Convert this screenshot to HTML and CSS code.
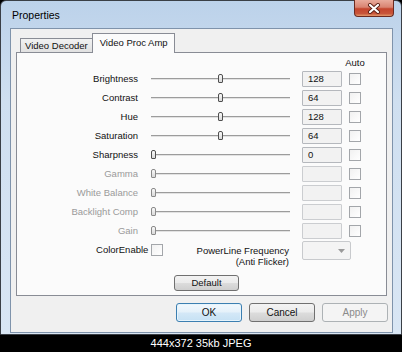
FILE: index.html
```html
<!DOCTYPE html>
<html>
<head>
  <title>Properties</title>
  <link rel="stylesheet" href="styles.css">
</head>
<body>
  <div class="window">
    <div class="titlebar">
      <span class="title">Properties</span>
      <div class="close-btn">
        <svg width="14" height="11" viewBox="0 0 14 11">
          <path d="M3 2 L11 9 M11 2 L3 9" stroke="#5a1f14" stroke-width="4" stroke-linecap="round"/>
          <path d="M3 2 L11 9 M11 2 L3 9" stroke="#fff" stroke-width="2.2" stroke-linecap="round"/>
        </svg>
      </div>
    </div>

    <div class="client">
      <div class="tabs">
        <div class="tab">Video Decoder</div>
        <div class="tab active">Video Proc Amp</div>
      </div>

      <div class="panel">
        <div class="amp-grid">
          <div class="auto-head">Auto</div>

          <!-- enabled properties -->
          <div class="lbl">Brightness</div>
          <div class="slider"><span class="thumb" style="left:calc(0.5 * (100% - 5px))"></span></div>
          <div class="cell"><div class="valbox">128</div></div>
          <div class="check"></div>

          <div class="lbl">Contrast</div>
          <div class="slider"><span class="thumb" style="left:calc(0.5 * (100% - 5px))"></span></div>
          <div class="cell"><div class="valbox">64</div></div>
          <div class="check"></div>

          <div class="lbl">Hue</div>
          <div class="slider"><span class="thumb" style="left:calc(0.5 * (100% - 5px))"></span></div>
          <div class="cell"><div class="valbox">128</div></div>
          <div class="check"></div>

          <div class="lbl">Saturation</div>
          <div class="slider"><span class="thumb" style="left:calc(0.5 * (100% - 5px))"></span></div>
          <div class="cell"><div class="valbox">64</div></div>
          <div class="check"></div>

          <div class="lbl">Sharpness</div>
          <div class="slider"><span class="thumb" style="left:0"></span></div>
          <div class="cell"><div class="valbox">0</div></div>
          <div class="check"></div>

          <!-- disabled properties -->
          <div class="lbl off">Gamma</div>
          <div class="slider off"><span class="thumb" style="left:0"></span></div>
          <div class="cell"><div class="valbox off"></div></div>
          <div class="check"></div>

          <div class="lbl off">White Balance</div>
          <div class="slider off"><span class="thumb" style="left:0"></span></div>
          <div class="cell"><div class="valbox off"></div></div>
          <div class="check"></div>

          <div class="lbl off">Backlight Comp</div>
          <div class="slider off"><span class="thumb" style="left:0"></span></div>
          <div class="cell"><div class="valbox off"></div></div>
          <div class="check"></div>

          <div class="lbl off">Gain</div>
          <div class="slider off"><span class="thumb" style="left:0"></span></div>
          <div class="cell"><div class="valbox off"></div></div>
          <div class="check"></div>

          <div class="extra-row">
            <div class="color-enable">ColorEnable <span class="check"></span></div>
            <div class="powerline">PowerLine Frequency<br>(Anti Flicker)</div>
          </div>
          <div class="cell">
            <div class="combo">
              <svg width="7" height="4" viewBox="0 0 7 4"><path d="M0 0 H7 L3.5 4 Z" fill="#9a9a9a"/></svg>
            </div>
          </div>
        </div>

        <div class="default-row">
          <button class="btn small">Default</button>
        </div>
      </div>

      <div class="buttons">
        <button class="btn focus">OK</button>
        <button class="btn">Cancel</button>
        <button class="btn disabled">Apply</button>
      </div>
    </div>
  </div>

  <div class="caption">444x372 35kb JPEG</div>
</body>
</html>
```

FILE: styles.css
```css
body {
  margin: 0;
  background: #000;
  font-family: "Liberation Sans", Arial, sans-serif;
  font-size: 9.5px;
  color: #111;
}

.window {
  box-sizing: border-box;
  width: 402px;
  height: 335px;
  border: 1px solid #3a3f46;
  border-radius: 6px 6px 0 0;
  padding: 0 8px 1px 9px;
  background: linear-gradient(180deg, #bcd2ea 0%, #cfdff0 30%, #d9e6f4 100%);
}

.titlebar {
  height: 27px;
  display: flex;
  justify-content: space-between;
  align-items: flex-start;
}

.title {
  margin: 8px 0 0 2px;
  font-size: 10.5px;
  line-height: 13px;
  color: #000;
}

.close-btn {
  width: 40px;
  height: 17px;
  margin-top: -1px;
  margin-right: -1px;
  box-sizing: border-box;
  border: 1px solid #6b2a20;
  border-top: none;
  border-radius: 0 0 4px 4px;
  background: linear-gradient(180deg, #e9ab9c 0%, #d98471 45%, #c4452d 55%, #c8553a 85%, #e39a6c 100%);
  display: flex;
  align-items: center;
  justify-content: center;
}

.client {
  box-sizing: border-box;
  height: 305px;
  border: 1px solid #7f93ab;
  background: #f0f0f0;
  padding: 4px 5px 0 5px;
}

.tabs {
  height: 19px;
  display: flex;
  align-items: flex-end;
  padding-left: 4px;
}

.tab {
  box-sizing: border-box;
  height: 14px;
  padding: 0 4px;
  border: 1px solid #898c95;
  border-bottom: none;
  background: linear-gradient(180deg, #f2f2f2, #e1e1e1);
  line-height: 13px;
}

.tab.active {
  height: 20px;
  margin-bottom: -1px;
  margin-left: -1px;
  padding: 0 6px 0 7px;
  background: #fbfbfb;
  position: relative;
  line-height: 17px;
}

.panel {
  box-sizing: border-box;
  height: 244px;
  border: 1px solid #898c95;
  background: #fbfbfb;
  padding-top: 4px;
}

.amp-grid {
  display: grid;
  grid-template-columns: 134px 139px 59px 12px;
  grid-template-rows: 12px repeat(9, 19px) 28px;
  align-items: center;
}

.auto-head {
  grid-column: 4;
  justify-self: center;
  white-space: nowrap;
  line-height: 12px;
}

.lbl {
  text-align: right;
  padding-right: 13px;
  white-space: nowrap;
}

.off {
  color: #9a9a9a;
}

.slider {
  position: relative;
  height: 19px;
}

.slider::before {
  content: "";
  position: absolute;
  left: 0;
  right: 0;
  top: 9px;
  height: 0;
  border-top: 1px solid #9c9c9c;
  border-bottom: 1px solid #e2e2e2;
}

.thumb {
  position: absolute;
  top: 5px;
  width: 5px;
  height: 9px;
  box-sizing: border-box;
  border: 1px solid #4f4f4f;
  border-radius: 2px 2px 1px 1px;
  background: linear-gradient(180deg, #fafafa, #d9d9d9);
}

.slider.off .thumb {
  border-color: #8a8a8a;
}

.cell {
  padding-left: 12px;
}

.valbox {
  box-sizing: border-box;
  width: 40px;
  height: 16px;
  border: 1px solid #b5b8bd;
  border-radius: 1px;
  background: #f2f2f2;
  padding-left: 5px;
  line-height: 14px;
}

.valbox.off {
  border-color: #cbcdd0;
}

.check {
  display: inline-block;
  box-sizing: border-box;
  width: 12px;
  height: 12px;
  border: 1px solid #a3a6aa;
  background: linear-gradient(135deg, #f1f1f1, #fff);
  vertical-align: middle;
}

.extra-row {
  grid-column: 1 / 3;
  align-self: start;
  display: flex;
  padding-top: 4px;
}

.color-enable {
  width: 146px;
  text-align: right;
  line-height: 12px;
  white-space: nowrap;
}

.powerline {
  flex: 1;
  text-align: right;
  padding-right: 1px;
  line-height: 11px;
  margin-top: 1px;
}

.extra-row + .cell {
  align-self: start;
  padding-top: 1px;
}

.combo {
  box-sizing: border-box;
  width: 49px;
  height: 19px;
  border: 1px solid #c8cacd;
  border-radius: 2px;
  background: #f4f4f4;
  display: flex;
  align-items: center;
  justify-content: flex-end;
  padding-right: 5px;
}

.default-row {
  padding: 7px 0 0 157px;
}

.btn {
  box-sizing: border-box;
  width: 66px;
  height: 19px;
  padding: 0;
  border: 1px solid #707070;
  border-radius: 3px;
  background: linear-gradient(180deg, #f3f3f3 0%, #ebebeb 48%, #dcdcdc 52%, #cfcfcf 100%);
  font-family: "Liberation Sans", Arial, sans-serif;
  font-size: 10px;
  color: #111;
}

.btn.small {
  width: 65px;
  height: 16px;
  font-size: 9.5px;
  line-height: 12px;
}

.btn.focus {
  border-color: #3c7fb1;
  background: linear-gradient(180deg, #f1f8fd 0%, #e5f1fa 48%, #d4e8f7 52%, #c6e1f4 100%);
  box-shadow: inset 0 0 0 1px #e6f4fc;
}

.btn.disabled {
  border-color: #adb2b5;
  background: #f4f4f4;
  color: #8a8a8a;
}

.buttons {
  display: flex;
  justify-content: flex-end;
  gap: 7px;
  margin: 7px -1px 0 0;
}

.caption {
  height: 17px;
  line-height: 17px;
  text-align: center;
  color: #fff;
  font-size: 11px;
}
```
